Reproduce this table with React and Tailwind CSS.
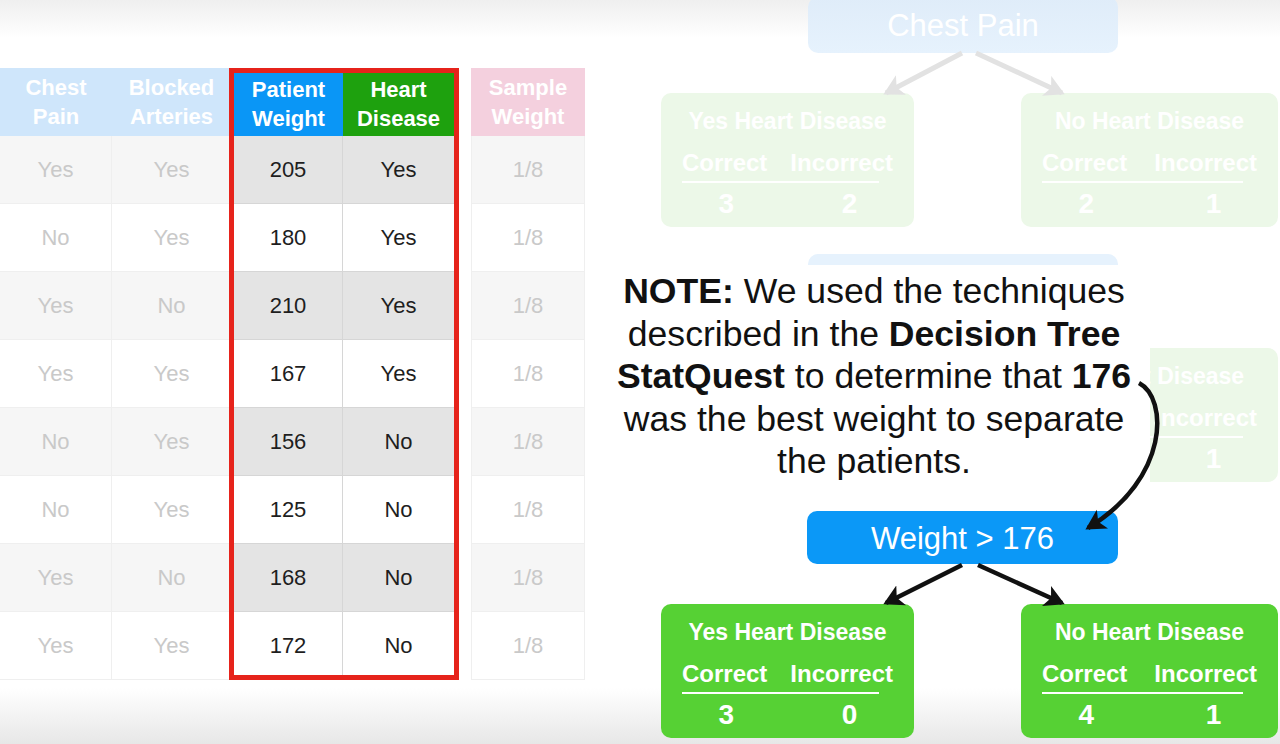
import React from 'react';

const rows = [
  ['Yes', 'Yes', '205', 'Yes'],
  ['No', 'Yes', '180', 'Yes'],
  ['Yes', 'No', '210', 'Yes'],
  ['Yes', 'Yes', '167', 'Yes'],
  ['No', 'Yes', '156', 'No'],
  ['No', 'Yes', '125', 'No'],
  ['Yes', 'No', '168', 'No'],
  ['Yes', 'Yes', '172', 'No'],
];

const LeafNode = ({ title, left, right, faded, className }) => (
  <div
    className={`absolute h-[134px] rounded-[10px] pt-[14px] px-[21px] ${
      faded ? 'bg-[#ecf8e8] text-white' : 'bg-[#56d134] text-white'
    } ${className}`}
  >
    <div className="text-center text-[23px] font-bold leading-[28px] whitespace-nowrap">{title}</div>
    <div className="mt-[14px] grid grid-cols-[auto_auto] justify-between">
      <div className="text-[24px] font-bold leading-[28px]">Correct</div>
      <div className="text-[24px] font-bold leading-[28px]">Incorrect</div>
      <div className="col-span-2 mt-[4px] mr-[14px] h-[2px] bg-white"></div>
      <div className="mt-[6px] pl-[3px] text-center text-[28px] font-bold leading-[30px]">{left}</div>
      <div className="mt-[6px] pl-[16px] text-center text-[28px] font-bold leading-[30px]">{right}</div>
    </div>
  </div>
);

const App = () => {
  return (
    <div className="relative w-[1280px] h-[744px] overflow-hidden font-['Liberation_Sans',Arial,sans-serif] bg-[linear-gradient(to_bottom,#efefef_0px,#ffffff_38px,#ffffff_688px,#e7e7e7_744px)]">
      {/* Table */}
      <div className="relative pt-[68px]">
        <div className="grid grid-cols-[112px_119px_112px_114px_14px_114px]">
          <div className="h-[68px] bg-[#cfe6fb] text-white font-bold text-[22px] leading-[29px] flex items-center justify-center text-center">
            Chest<br />Pain
          </div>
          <div className="h-[68px] bg-[#cfe6fb] text-white font-bold text-[22px] leading-[29px] flex items-center justify-center text-center">
            Blocked<br />Arteries
          </div>
          <div className="h-[68px] bg-[#0a96f6] text-white font-bold text-[22px] leading-[29px] flex items-center justify-center text-center pt-[3px] pl-[3px]">
            Patient<br />Weight
          </div>
          <div className="h-[68px] bg-[#1ea10e] text-white font-bold text-[22px] leading-[29px] flex items-center justify-center text-center pt-[3px] pr-[3px]">
            Heart<br />Disease
          </div>
          <div></div>
          <div className="h-[68px] bg-[#f4d0de] text-white font-bold text-[22px] leading-[29px] flex items-center justify-center text-center">
            Sample<br />Weight
          </div>

          {rows.map((r, i) => {
            const striped = i % 2 === 0;
            const fadedBg = striped ? 'bg-[#f6f6f6]' : 'bg-white';
            const hlBg = striped ? 'bg-[#e4e4e4]' : 'bg-white';
            return (
              <React.Fragment key={i}>
                <div className={`h-[68px] ${fadedBg} border-b border-r border-[#efefef] flex items-center justify-center text-[22px] text-[#c9c9c9]`}>
                  {r[0]}
                </div>
                <div className={`h-[68px] ${fadedBg} border-b border-[#efefef] flex items-center justify-center text-[22px] text-[#c9c9c9]`}>
                  {r[1]}
                </div>
                <div className={`h-[68px] ${hlBg} border-b border-r border-[#d6d6d6] flex items-center justify-center text-[22px] text-[#1e1e1e] pl-[3px]`}>
                  {r[2]}
                </div>
                <div className={`h-[68px] ${hlBg} border-b border-[#d6d6d6] flex items-center justify-center text-[22px] text-[#1e1e1e] pr-[3px]`}>
                  {r[3]}
                </div>
                <div></div>
                <div className={`h-[68px] ${fadedBg} border-b border-x border-[#efefef] flex items-center justify-center text-[22px] text-[#c9c9c9]`}>
                  1/8
                </div>
              </React.Fragment>
            );
          })}
        </div>
        {/* red highlight frame */}
        <div className="absolute left-[229px] top-[68px] w-[230px] h-[612px] border-[5px] border-[#e6231b]"></div>
      </div>

      {/* Diagram */}
      <div className="absolute left-[600px] top-0 w-[680px] h-[744px]">
        {/* faded first tree */}
        <div className="absolute left-[208px] top-[-3px] w-[310px] h-[56px] rounded-[10px] bg-[linear-gradient(to_bottom,#dfecf9,#e6f2fd)] flex items-center justify-center text-white text-[31px] pt-[2px]">
          Chest Pain
        </div>
        <LeafNode faded title="Yes Heart Disease" left="3" right="2" className="left-[61px] top-[93px] w-[253px]" />
        <LeafNode faded title="No Heart Disease" left="2" right="1" className="left-[421px] top-[93px] w-[257px]" />

        {/* faded second tree, mostly hidden behind the note */}
        <div className="absolute left-[208px] top-[254px] w-[310px] h-[53px] rounded-[10px] bg-[#e6f2fd]"></div>
        <LeafNode faded title="No Heart Disease" left="2" right="1" className="left-[421px] top-[348px] w-[257px]" />

        {/* note */}
        <div className="absolute left-[0px] top-[265px] w-[550px] h-[230px] bg-white pt-[5px]">
          <p className="text-center text-[35.6px] leading-[42.5px] text-[#111] pr-[2px] whitespace-nowrap">
            <b>NOTE:</b> We used the techniques
            <br />
            described in the <b>Decision Tree</b>
            <br />
            <b>StatQuest</b> to determine that <b>176</b>
            <br />
            was the best weight to separate
            <br />
            the patients.
          </p>
        </div>

        {/* main tree */}
        <div className="absolute left-[207px] top-[511px] w-[311px] h-[53px] rounded-[10px] bg-[#0b98f7] flex items-center justify-center text-white text-[31px] pt-[4px]">
          Weight &gt; 176
        </div>
        <LeafNode title="Yes Heart Disease" left="3" right="0" className="left-[61px] top-[604px] w-[253px]" />
        <LeafNode title="No Heart Disease" left="4" right="1" className="left-[421px] top-[604px] w-[257px]" />

        <svg className="absolute left-0 top-0" width="680" height="744" viewBox="600 0 680 744">
          <defs>
            <marker id="ah" markerWidth="24" markerHeight="24" refX="17" refY="11" orient="auto" markerUnits="userSpaceOnUse">
              <path d="M0 0 L20 11 L0 22 L5 11 Z" fill="#111" />
            </marker>
            <marker id="ahf" markerWidth="24" markerHeight="24" refX="17" refY="11" orient="auto" markerUnits="userSpaceOnUse">
              <path d="M0 0 L20 11 L0 22 L5 11 Z" fill="#e2e2e2" />
            </marker>
          </defs>
          <path d="M962 53 L886 93" stroke="#e2e2e2" strokeWidth="5" markerEnd="url(#ahf)" />
          <path d="M976 53 L1062 93" stroke="#e2e2e2" strokeWidth="5" markerEnd="url(#ahf)" />

          <path d="M1139 383 C 1168 398, 1170 478, 1088 528" fill="none" stroke="#111" strokeWidth="4.5" markerEnd="url(#ah)" />
          <path d="M962 565 L886 603" stroke="#111" strokeWidth="4.5" markerEnd="url(#ah)" />
          <path d="M978 565 L1062 603" stroke="#111" strokeWidth="4.5" markerEnd="url(#ah)" />
        </svg>
      </div>
    </div>
  );
};

export default App;
